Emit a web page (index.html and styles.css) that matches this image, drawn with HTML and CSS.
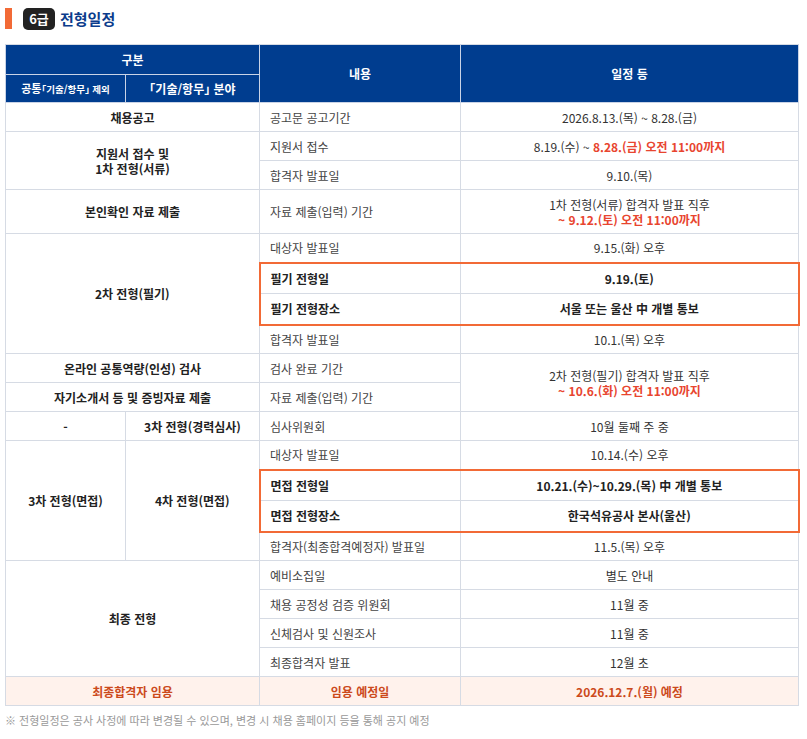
FILE: index.html
```html
<!DOCTYPE html>
<html lang="ko">
<head>
<meta charset="utf-8">
<title>전형일정</title>
<link rel="stylesheet" href="styles.css">
</head>
<body>
<div class="page">
  <h2 class="title"><span class="bar"></span><span class="badge">6급</span><span class="title-text">전형일정</span></h2>
  <table class="schedule">
    <colgroup><col class="c1"><col class="c2"><col class="c3"><col class="c4"></colgroup>
    <thead>
      <tr class="h1"><th colspan="2">구분</th><th rowspan="2">내용</th><th rowspan="2">일정 등</th></tr>
      <tr class="h2"><th class="sub"><span class="big">공통</span>「기술/항무」 제외</th><th>「기술/항무」 분야</th></tr>
    </thead>
    <tbody>
      <tr><td colspan="2" class="stage">채용공고</td><td class="item">공고문 공고기간</td><td class="date">2026.8.13.(목) ~ 8.28.(금)</td></tr>
      <tr><td colspan="2" rowspan="2" class="stage">지원서 접수 및<br>1차 전형(서류)</td><td class="item">지원서 접수</td><td class="date">8.19.(수) ~ <em>8.28.(금) 오전 11:00까지</em></td></tr>
      <tr><td class="item">합격자 발표일</td><td class="date">9.10.(목)</td></tr>
      <tr class="tall"><td colspan="2" class="stage">본인확인 자료 제출</td><td class="item">자료 제출(입력) 기간</td><td class="date">1차 전형(서류) 합격자 발표 직후<br><em>~ 9.12.(토) 오전 11:00까지</em></td></tr>
      <tr><td colspan="2" rowspan="4" class="stage">2차 전형(필기)</td><td class="item">대상자 발표일</td><td class="date">9.15.(화) 오후</td></tr>
      <tr class="hl hl-top"><td class="item strong">필기 전형일</td><td class="date strong">9.19.(토)</td></tr>
      <tr class="hl hl-bottom"><td class="item strong">필기 전형장소</td><td class="date strong">서울 또는 울산 中 개별 통보</td></tr>
      <tr><td class="item">합격자 발표일</td><td class="date">10.1.(목) 오후</td></tr>
      <tr><td colspan="2" class="stage">온라인 공통역량(인성) 검사</td><td class="item">검사 완료 기간</td><td rowspan="2" class="date">2차 전형(필기) 합격자 발표 직후<br><em>~ 10.6.(화) 오전 11:00까지</em></td></tr>
      <tr><td colspan="2" class="stage">자기소개서 등 및 증빙자료 제출</td><td class="item">자료 제출(입력) 기간</td></tr>
      <tr><td class="stage">-</td><td class="stage">3차 전형(경력심사)</td><td class="item">심사위원회</td><td class="date">10월 둘째 주 중</td></tr>
      <tr><td rowspan="4" class="stage">3차 전형(면접)</td><td rowspan="4" class="stage">4차 전형(면접)</td><td class="item">대상자 발표일</td><td class="date">10.14.(수) 오후</td></tr>
      <tr class="hl hl-top"><td class="item strong">면접 전형일</td><td class="date strong">10.21.(수)~10.29.(목) 中 개별 통보</td></tr>
      <tr class="hl hl-bottom"><td class="item strong">면접 전형장소</td><td class="date strong">한국석유공사 본사(울산)</td></tr>
      <tr><td class="item">합격자(최종합격예정자) 발표일</td><td class="date">11.5.(목) 오후</td></tr>
      <tr><td colspan="2" rowspan="4" class="stage">최종 전형</td><td class="item">예비소집일</td><td class="date">별도 안내</td></tr>
      <tr><td class="item">채용 공정성 검증 위원회</td><td class="date">11월 중</td></tr>
      <tr><td class="item">신체검사 및 신원조사</td><td class="date">11월 중</td></tr>
      <tr><td class="item">최종합격자 발표</td><td class="date">12월 초</td></tr>
      <tr class="final"><td colspan="2">최종합격자 임용</td><td>임용 예정일</td><td>2026.12.7.(월) 예정</td></tr>
    </tbody>
  </table>
  <p class="note">※ 전형일정은 공사 사정에 따라 변경될 수 있으며, 변경 시 채용 홈페이지 등을 통해 공지 예정</p>
</div>
</body>
</html>
```

FILE: styles.css
```css
html, body {
  margin: 0;
  padding: 0;
  background: #fff;
}
body {
  font-family: "Noto Sans CJK KR", "Noto Sans", sans-serif;
  color: #333;
}
.page {
  padding: 8px 9px 0 5px;
}
.title {
  display: flex;
  align-items: center;
  margin: 0;
  height: 21px;
}
.bar {
  width: 7px;
  height: 21px;
  background: #f26a36;
  margin-right: 11px;
}
.badge {
  display: inline-flex;
  align-items: center;
  justify-content: center;
  width: 32px;
  height: 22px;
  border-radius: 5px;
  background: #222;
  color: #fff;
  font-size: 13px;
  font-weight: 700;
  margin-right: 5px;
}
.title-text {
  color: #0b3c8c;
  font-size: 15px;
  font-weight: 700;
}
.schedule {
  margin-top: 15px;
  width: 793px;
  table-layout: fixed;
  border-collapse: collapse;
  font-size: 12px;
  line-height: 15px;
}
.c1 { width: 120px; }
.c2 { width: 134px; }
.c3 { width: 201px; }
.c4 { width: 338px; }
.schedule th, .schedule td {
  border: 1px solid #d6dbe4;
  padding: 0 10px;
  text-align: center;
  vertical-align: middle;
}
.schedule th {
  background: #003d8f;
  color: #fff;
  font-weight: 700;
  border-color: #c9d3e6;
  font-size: 12px;
  font-feature-settings: "halt" 1;
}
.schedule thead tr:first-child th {
  border-top-color: #d6dbe4;
}
.h1 { height: 30px; }
.h2 { height: 28px; }
.schedule th.sub {
  font-size: 9.5px;
  padding: 0;
  white-space: nowrap;
}
.schedule th.sub .big {
  font-size: 11px;
}
.schedule tbody tr { height: 29px; }
.schedule tbody tr.tall { height: 44px; }
.schedule tbody tr.hl { height: 31px; }
.stage {
  font-weight: 700;
  color: #222;
}
.schedule td.item {
  text-align: left;
  color: #444;
}
.schedule td.date {
  color: #333;
}
.schedule td.strong {
  font-weight: 700;
  color: #222;
}
.schedule em {
  font-style: normal;
  font-weight: 700;
  color: #e8452f;
}
.hl td:nth-last-child(2) { border-left: 2px solid #f26a36; }
.hl td:last-child { border-right: 2px solid #f26a36; }
.hl-top td { border-top: 2px solid #f26a36; }
.hl-bottom td { border-bottom: 2px solid #f26a36; }
.final td {
  background: #fff2ec;
  color: #cc4a1c;
  font-weight: 700;
}
.note {
  margin: 6px 0 0;
  font-size: 11px;
  color: #999;
}
```
